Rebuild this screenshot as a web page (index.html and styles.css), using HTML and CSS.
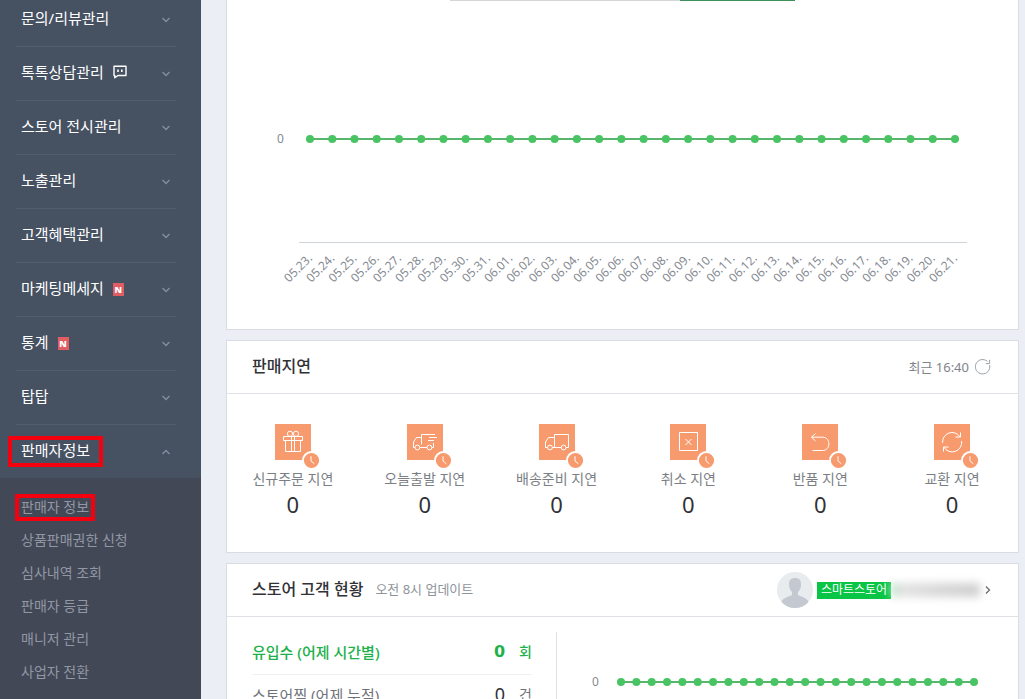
FILE: index.html
```html
<!DOCTYPE html>
<html lang="ko">
<head>
  <meta charset="UTF-8">
  <meta name="viewport" content="width=device-width, initial-scale=1.0">
  <title>스마트스토어센터</title>
  <link rel="stylesheet" href="styles.css">
</head>
<body>
  <!-- 공통 아이콘 -->
  <svg class="sprite" aria-hidden="true">
    <symbol id="chevron" viewBox="0 0 10 10">
      <path d="M1.5 3 L5 6.5 L8.5 3" fill="none" stroke="currentColor" stroke-width="1.3"/>
    </symbol>
    <symbol id="clock" viewBox="0 0 20 20">
      <circle cx="10" cy="10" r="9" fill="#f79b6e" stroke="#fff" stroke-width="2"/>
      <path d="M9.5 5.5 V10.5 L13 13.5" fill="none" stroke="#fff" stroke-width="1"/>
    </symbol>
  </svg>

  <div class="layout">
    <aside class="sidebar">
      <nav class="menu">
        <button type="button" class="menu-item">문의/리뷰관리<svg class="arrow"><use href="#chevron"/></svg></button>
        <button type="button" class="menu-item">톡톡상담관리
          <svg class="talk" viewBox="0 0 14 14">
            <path d="M1 1.2 H13 V10.5 H5 L1.8 12.8 V10.5 H1 Z" fill="none" stroke="#fff" stroke-width="1.4" stroke-linejoin="round"/>
            <path d="M5 4.5 V7 M8.8 4.5 V7" stroke="#fff" stroke-width="1.6"/>
          </svg>
          <svg class="arrow"><use href="#chevron"/></svg></button>
        <button type="button" class="menu-item">스토어 전시관리<svg class="arrow"><use href="#chevron"/></svg></button>
        <button type="button" class="menu-item">노출관리<svg class="arrow"><use href="#chevron"/></svg></button>
        <button type="button" class="menu-item">고객혜택관리<svg class="arrow"><use href="#chevron"/></svg></button>
        <button type="button" class="menu-item">마케팅메세지<span class="new">N</span><svg class="arrow"><use href="#chevron"/></svg></button>
        <button type="button" class="menu-item">통계<span class="new">N</span><svg class="arrow"><use href="#chevron"/></svg></button>
        <button type="button" class="menu-item">탑탑<svg class="arrow"><use href="#chevron"/></svg></button>
        <button type="button" class="menu-item open"><span class="marked">판매자정보</span><svg class="arrow"><use href="#chevron"/></svg></button>
      </nav>
      <ul class="submenu">
        <li><a href="#" class="marked small">판매자 정보</a></li>
        <li><a href="#">상품판매권한 신청</a></li>
        <li><a href="#">심사내역 조회</a></li>
        <li><a href="#">판매자 등급</a></li>
        <li><a href="#">매니저 관리</a></li>
        <li><a href="#">사업자 전환</a></li>
      </ul>
    </aside>

    <main class="content">
      <section class="card chart-card">
        <div class="tab-line"><span></span><span></span><span class="active"></span></div>
        <svg class="chart" id="salesChart" viewBox="0 0 791 328"></svg>
      </section>

      <section class="card">
        <header class="card-header">
          <h2>판매지연</h2>
          <div class="recent"><span>최근 16:40</span>
            <button type="button" class="refresh" aria-label="새로고침">
              <svg viewBox="0 0 16 16">
                <path d="M14.6 6.2 A7.2 7.2 0 1 1 12.4 2.4 M14.6 0.8 V4.6 H10.8" fill="none" stroke="#9a9fa6" stroke-width="1"/>
              </svg>
            </button>
          </div>
        </header>
        <div class="delays">
          <div class="delay">
            <div class="delay-icon">
              <svg viewBox="0 0 36 36">
                <path d="M8.5 12.5 H27.5 V16.5 H8.5 Z M10.5 16.5 V27.5 H25.5 V16.5 M16.5 12.5 V27.5 M19.5 12.5 V27.5"/>
                <circle cx="15" cy="9.8" r="2.6"/><circle cx="21" cy="9.8" r="2.6"/>
              </svg>
              <svg class="clock"><use href="#clock"/></svg>
            </div>
            <span class="label">신규주문 지연</span>
            <strong>0</strong>
          </div>
          <div class="delay">
            <div class="delay-icon">
              <svg viewBox="0 0 36 36">
                <path d="M8 23.5 H6.5 V18 L9.5 13.5 H14.5 M14.5 20.5 V10.5 H28 M22 13.5 H30 M21 16.5 H27 M12.8 23.5 H20 M24.8 23.5 H26.5 V19"/>
                <circle cx="10.4" cy="23.5" r="2.4"/><circle cx="22.4" cy="23.5" r="2.4"/>
              </svg>
              <svg class="clock"><use href="#clock"/></svg>
            </div>
            <span class="label">오늘출발 지연</span>
            <strong>0</strong>
          </div>
          <div class="delay">
            <div class="delay-icon">
              <svg viewBox="0 0 36 36">
                <path d="M8.6 23.5 H6.5 V18 L9.5 13.5 H15.5 M15.5 23.5 V10.5 H29.5 V23.5 H27 M13.4 23.5 H22.2"/>
                <circle cx="11" cy="23.5" r="2.4"/><circle cx="24.6" cy="23.5" r="2.4"/>
              </svg>
              <svg class="clock"><use href="#clock"/></svg>
            </div>
            <span class="label">배송준비 지연</span>
            <strong>0</strong>
          </div>
          <div class="delay">
            <div class="delay-icon">
              <svg viewBox="0 0 36 36">
                <path d="M9.5 8.5 H27.5 V26.5 H9.5 Z M15.5 15 L21.5 21 M21.5 15 L15.5 21"/>
              </svg>
              <svg class="clock"><use href="#clock"/></svg>
            </div>
            <span class="label">취소 지연</span>
            <strong>0</strong>
          </div>
          <div class="delay">
            <div class="delay-icon">
              <svg viewBox="0 0 36 36">
                <path d="M13.5 9.5 L9.5 13.2 L13.5 17 M9.5 13.2 H20.5 C29 13.2 29 26.5 20.5 26.5 H10.5"/>
              </svg>
              <svg class="clock"><use href="#clock"/></svg>
            </div>
            <span class="label">반품 지연</span>
            <strong>0</strong>
          </div>
          <div class="delay">
            <div class="delay-icon">
              <svg viewBox="0 0 36 36">
                <path d="M8.6 19 A9.5 9.5 0 0 1 26 12.8 M26.5 8.5 V13 H21.5 M27.6 17 A9.5 9.5 0 0 1 10 23.2 M9.5 27.5 V23 H14.5"/>
              </svg>
              <svg class="clock"><use href="#clock"/></svg>
            </div>
            <span class="label">교환 지연</span>
            <strong>0</strong>
          </div>
        </div>
      </section>

      <section class="card">
        <header class="card-header">
          <h2>스토어 고객 현황</h2>
          <span class="update">오전 8시 업데이트</span>
          <a href="#" class="store" aria-label="스마트스토어">
            <svg class="avatar" viewBox="0 0 36 36">
              <clipPath id="round"><circle cx="18" cy="18" r="18"/></clipPath>
              <g clip-path="url(#round)">
                <rect width="36" height="36" fill="#e8ecef"/>
                <path d="M12 12 C12 8 14 6 18 6 S24 8 24 12 C24 16 23 18 21 20 V23 C25 25 31 26 32 31 V36 H4 V31 C5 26 11 25 15 23 V20 C13 18 12 16 12 12 Z" fill="#c3c8d1"/>
              </g>
            </svg>
            <span class="store-badge">스마트스토어</span>
            <span class="store-name"></span>
            <svg class="go"><use href="#chevron"/></svg>
          </a>
        </header>
        <div class="status">
          <dl class="stats">
            <div class="stat active"><dt>유입수 (어제 시간별)</dt><dd><b>0</b>회</dd></div>
            <div class="stat"><dt>스토어찜 (어제 누적)</dt><dd><b>0</b>건</dd></div>
          </dl>
          <div class="visit">
            <svg class="chart" id="visitChart" viewBox="0 0 461 120"></svg>
          </div>
        </div>
      </section>
    </main>
  </div>

  <script src="chart.js"></script>
</body>
</html>
```
FILE: styles.css
```css
* {
  box-sizing: border-box;
}

body {
  margin: 0;
  font-family: "Noto Sans", "Noto Sans CJK KR", sans-serif;
  font-size: 14px;
  color: #303236;
  background-color: #ebeff5;
}

button {
  font-family: inherit;
  border: none;
  background: none;
  padding: 0;
  cursor: pointer;
}

a {
  color: inherit;
  text-decoration: none;
}

.sprite {
  display: none;
}

.layout {
  display: flex;
  height: 100vh;
  overflow: hidden;
}

/* 왼쪽 메뉴 */
.sidebar {
  width: 201px;
  flex-shrink: 0;
  display: flex;
  flex-direction: column;
  background-color: #465162;
}

.menu {
  margin-top: -7px;
  padding: 0 25px 0 16px;
}

.menu-item {
  display: flex;
  align-items: center;
  width: 100%;
  height: 54px;
  padding: 0 5px 3px;
  border-bottom: 1px solid #525e6e;
  font-size: 15px;
  line-height: 24px;
  color: #fff;
}

.menu-item.open {
  height: 53px;
  border-bottom: none;
}

.arrow {
  width: 10px;
  height: 10px;
  margin: 3px 0 0 auto;
  color: #8490a0;
}

.open .arrow {
  transform: rotate(180deg);
}

.talk {
  width: 14px;
  height: 14px;
  margin-left: 9px;
}

.new {
  width: 11px;
  height: 13px;
  margin: 2px 0 0 9px;
  background-color: #e25c63;
  font-size: 9px;
  font-weight: 900;
  line-height: 13px;
  text-align: center;
}

.submenu {
  flex: 1;
  margin: 0;
  padding: 12px 21px;
  list-style: none;
  background-color: #434857;
  color: #9197a3;
  line-height: 33px;
}

/* 강조 표시 */
.marked {
  position: relative;
}

.marked::after {
  content: "";
  position: absolute;
  inset: -2px -13px -5px;
  border: 4px solid #f4000f;
}

.marked.small::after {
  inset: -3px -6px -5px;
}

/* 본문 */
.content {
  flex: 1;
  min-width: 0;
  padding: 0 6px 0 25px;
}

.card {
  margin-bottom: 10px;
  border: 1px solid #d9dce3;
  background-color: #fff;
}

.chart-card {
  border-top: none;
}

.tab-line {
  display: flex;
  justify-content: center;
}

.tab-line span {
  width: 115px;
  height: 1px;
  background-color: #d3d6d9;
}

.tab-line .active {
  background-color: #3c9159;
}

.chart {
  display: block;
  width: 100%;
}

.chart text {
  font-size: 12px;
  fill: #858a92;
}

.chart .axis {
  stroke: #cfd4d8;
}

.chart .line {
  stroke: #58b56c;
  stroke-width: 2;
}

.chart circle {
  fill: #48c462;
}

.card-header {
  display: flex;
  align-items: center;
  height: 53px;
  padding: 0 25px;
  border-bottom: 1px solid #e0e2e7;
}

.card-header h2 {
  margin: 0;
  padding-bottom: 3px;
  font-size: 16px;
  font-weight: 500;
  line-height: 24px;
}

.recent {
  display: flex;
  align-items: center;
  margin-left: auto;
  font-size: 13px;
  color: #80858c;
}

.recent span {
  padding-bottom: 2px;
}

.refresh {
  width: 16px;
  height: 16px;
  margin: 0 2px 0 6px;
}

.refresh svg {
  display: block;
}

.update {
  margin-left: 12px;
  padding-bottom: 3px;
  font-size: 13px;
  color: #8f949b;
}

.delays {
  display: flex;
  padding: 30px 0 34px;
}

.delay {
  flex: 1;
  display: flex;
  flex-direction: column;
  align-items: center;
}

.delay-icon {
  position: relative;
  width: 36px;
  height: 36px;
  background-color: #f79b6e;
  fill: none;
  stroke: #fff;
}

.delay-icon .clock {
  position: absolute;
  right: -10px;
  bottom: -10px;
  width: 19px;
  height: 19px;
  stroke: none;
}

.label {
  margin-top: 7px;
  line-height: 24px;
  color: #7b7f85;
}

.delay strong {
  font-size: 22px;
  font-weight: 400;
  line-height: 27px;
}

.store {
  display: flex;
  align-items: center;
  margin-left: auto;
}

.avatar {
  width: 36px;
  height: 36px;
}

.store-badge {
  width: 74px;
  height: 17px;
  margin-left: 4px;
  background-color: #08c545;
  font-size: 12px;
  line-height: 15px;
  text-align: center;
  color: #fff;
}

.store-name {
  width: 89px;
  height: 14px;
  background: linear-gradient(90deg, #b9e6c6, #e2e2e2 12%, #d6d6d6 60%, #cfcfcf);
  filter: blur(4px);
}

.go {
  width: 10px;
  height: 10px;
  margin-left: 3px;
  color: #676c73;
  transform: rotate(-90deg);
}

/* 스토어 고객 현황 */
.status {
  display: flex;
  padding: 15px 0;
}

.stats {
  width: 330px;
  flex-shrink: 0;
  margin: 0;
  padding: 0 24px 0 25px;
  border-right: 1px solid #e0e2e7;
}

.stat {
  display: flex;
  align-items: center;
  justify-content: space-between;
  height: 43px;
  padding-bottom: 4px;
  border-bottom: 1px solid #eff0f3;
  font-size: 15px;
  color: #6f7379;
}

.stat dd {
  display: flex;
  align-items: center;
  gap: 14px;
  margin: 0;
  font-size: 14px;
}

.stat b {
  font-size: 18px;
  font-weight: 400;
  color: #303236;
}

.stat.active,
.stat.active b {
  color: #1eb14b;
  font-weight: 500;
}

.stat.active b {
  font-family: "DejaVu Sans", sans-serif;
  font-size: 16px;
  font-weight: 700;
}

.visit {
  flex: 1;
  min-width: 0;
}
```
FILE: chart.js
```js
const NS = 'http://www.w3.org/2000/svg';

function add(svg, name, attrs, text) {
  const el = document.createElementNS(NS, name);
  Object.keys(attrs).forEach(key => el.setAttribute(key, attrs[key]));
  if (text) el.textContent = text;
  svg.appendChild(el);
}

// 값이 모두 0인 꺾은선 그래프
function drawLine(svg, count, left, right, y) {
  const step = (right - left) / (count - 1);
  add(svg, 'line', { class: 'line', x1: left, x2: right, y1: y, y2: y });
  for (let i = 0; i < count; i++) {
    add(svg, 'circle', { cx: left + step * i, cy: y, r: 4 });
  }
  return step;
}

// 최근 30일 매출
const sales = document.getElementById('salesChart');
const step = drawLine(sales, 30, 83, 728, 138);
add(sales, 'text', { x: 50, y: 142 }, '0');
add(sales, 'line', { class: 'axis', x1: 72, x2: 740, y1: 241.5, y2: 241.5 });

const day = new Date(2020, 4, 23);
for (let i = 0; i < 30; i++) {
  const mm = String(day.getMonth() + 1).padStart(2, '0');
  const dd = String(day.getDate()).padStart(2, '0');
  const x = 86 + step * i;
  add(sales, 'text', { x: x, y: 258, 'text-anchor': 'end', transform: `rotate(-45 ${x} 258)` }, `${mm}.${dd}.`);
  day.setDate(day.getDate() + 1);
}

// 시간별 유입수
const visit = document.getElementById('visitChart');
drawLine(visit, 24, 64, 417, 50);
add(visit, 'text', { x: 35, y: 54 }, '0');
```
